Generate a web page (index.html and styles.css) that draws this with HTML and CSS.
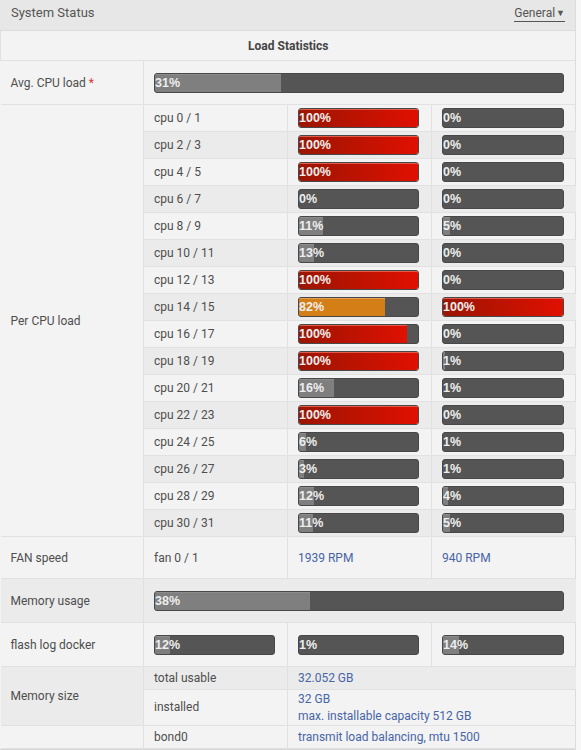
FILE: index.html
```html
<!DOCTYPE html>
<html>
<head>
<meta charset="utf-8">
<link rel="stylesheet" href="styles.css">
</head>
<body>
<div class="panel">
  <div class="panel-head">
    <span class="title">System Status</span>
    <span class="menu">General<span class="caret">▼</span></span>
  </div>
  <table class="stats">
    <colgroup><col class="c1"><col class="c2"><col class="c3"><col class="c4"></colgroup>
    <tr class="caption"><th colspan="4">Load Statistics</th></tr>
    <tr class="avg">
      <td class="label">Avg. CPU load <span class="req">*</span></td>
      <td colspan="3"><div class="bar"><div class="fill gray" style="width:31%"></div><span>31%</span></div></td>
    </tr>
    <tr class="cpu">
      <td class="label" rowspan="16">Per CPU load</td>
      <td>cpu 0 / 1</td>
      <td><div class="bar"><div class="fill red" style="width:100%"></div><span>100%</span></div></td>
      <td><div class="bar"><span>0%</span></div></td>
    </tr>
    <tr class="cpu alt">
      <td>cpu 2 / 3</td>
      <td><div class="bar"><div class="fill red" style="width:100%"></div><span>100%</span></div></td>
      <td><div class="bar"><span>0%</span></div></td>
    </tr>
    <tr class="cpu">
      <td>cpu 4 / 5</td>
      <td><div class="bar"><div class="fill red" style="width:100%"></div><span>100%</span></div></td>
      <td><div class="bar"><span>0%</span></div></td>
    </tr>
    <tr class="cpu alt">
      <td>cpu 6 / 7</td>
      <td><div class="bar"><span>0%</span></div></td>
      <td><div class="bar"><span>0%</span></div></td>
    </tr>
    <tr class="cpu">
      <td>cpu 8 / 9</td>
      <td><div class="bar"><div class="fill gray" style="width:20%"></div><span>11%</span></div></td>
      <td><div class="bar"><div class="fill gray" style="width:6%"></div><span>5%</span></div></td>
    </tr>
    <tr class="cpu alt">
      <td>cpu 10 / 11</td>
      <td><div class="bar"><div class="fill gray" style="width:13%"></div><span>13%</span></div></td>
      <td><div class="bar"><span>0%</span></div></td>
    </tr>
    <tr class="cpu">
      <td>cpu 12 / 13</td>
      <td><div class="bar"><div class="fill red" style="width:100%"></div><span>100%</span></div></td>
      <td><div class="bar"><span>0%</span></div></td>
    </tr>
    <tr class="cpu alt">
      <td>cpu 14 / 15</td>
      <td><div class="bar"><div class="fill orange" style="width:72%"></div><span>82%</span></div></td>
      <td><div class="bar"><div class="fill red" style="width:100%"></div><span>100%</span></div></td>
    </tr>
    <tr class="cpu">
      <td>cpu 16 / 17</td>
      <td><div class="bar"><div class="fill red" style="width:91%"></div><span>100%</span></div></td>
      <td><div class="bar"><span>0%</span></div></td>
    </tr>
    <tr class="cpu alt">
      <td>cpu 18 / 19</td>
      <td><div class="bar"><div class="fill red" style="width:100%"></div><span>100%</span></div></td>
      <td><div class="bar"><div class="fill gray" style="width:2%"></div><span>1%</span></div></td>
    </tr>
    <tr class="cpu">
      <td>cpu 20 / 21</td>
      <td><div class="bar"><div class="fill gray" style="width:29%"></div><span>16%</span></div></td>
      <td><div class="bar"><span>1%</span></div></td>
    </tr>
    <tr class="cpu alt">
      <td>cpu 22 / 23</td>
      <td><div class="bar"><div class="fill red" style="width:100%"></div><span>100%</span></div></td>
      <td><div class="bar"><span>0%</span></div></td>
    </tr>
    <tr class="cpu">
      <td>cpu 24 / 25</td>
      <td><div class="bar"><div class="fill gray" style="width:6%"></div><span>6%</span></div></td>
      <td><div class="bar"><span>1%</span></div></td>
    </tr>
    <tr class="cpu alt">
      <td>cpu 26 / 27</td>
      <td><div class="bar"><div class="fill gray" style="width:4%"></div><span>3%</span></div></td>
      <td><div class="bar"><span>1%</span></div></td>
    </tr>
    <tr class="cpu">
      <td>cpu 28 / 29</td>
      <td><div class="bar"><div class="fill gray" style="width:13%"></div><span>12%</span></div></td>
      <td><div class="bar"><div class="fill gray" style="width:4%"></div><span>4%</span></div></td>
    </tr>
    <tr class="cpu alt">
      <td>cpu 30 / 31</td>
      <td><div class="bar"><div class="fill gray" style="width:12%"></div><span>11%</span></div></td>
      <td><div class="bar"><div class="fill gray" style="width:6%"></div><span>5%</span></div></td>
    </tr>
    <tr class="fan">
      <td class="label">FAN speed</td>
      <td>fan 0 / 1</td>
      <td class="value">1939 RPM</td>
      <td class="value">940 RPM</td>
    </tr>
    <tr class="mem alt">
      <td class="label">Memory usage</td>
      <td colspan="3"><div class="bar"><div class="fill gray" style="width:38%"></div><span>38%</span></div></td>
    </tr>
    <tr class="flash">
      <td class="label">flash log docker</td>
      <td><div class="bar"><div class="fill gray" style="width:13%"></div><span>12%</span></div></td>
      <td><div class="bar"><span>1%</span></div></td>
      <td><div class="bar"><div class="fill gray" style="width:13%"></div><span>14%</span></div></td>
    </tr>
    <tr class="size alt">
      <td class="label" rowspan="2">Memory size</td>
      <td>total usable</td>
      <td class="value" colspan="2">32.052 GB</td>
    </tr>
    <tr class="size tall">
      <td>installed</td>
      <td class="value" colspan="2">32 GB<br>max. installable capacity 512 GB</td>
    </tr>
    <tr class="size">
      <td class="label"></td>
      <td>bond0</td>
      <td class="value" colspan="2">transmit load balancing, mtu 1500</td>
    </tr>
  </table>
</div>
</body>
</html>
```

FILE: styles.css
```css
html, body {
  margin: 0;
  padding: 0;
  background: #f7f7f7;
}

body {
  font-family: Roboto, "Liberation Sans", sans-serif;
  font-size: 12px;
  color: #4e4e4e;
}

.panel {
  width: 575px;
  border-right: 1px solid #dcdcdc;
  border-bottom: 1px solid #d6d6d6;
  background: #f3f3f3;
}

.panel-head {
  height: 31px;
  display: flex;
  align-items: flex-start;
  justify-content: space-between;
  padding: 5px 10px 0 11px;
  background: #e7e7e7;
  border-bottom: 1px solid #dcdcdc;
  box-sizing: border-box;
}

.title {
  font-size: 13px;
  line-height: 16px;
  color: #555;
}

.menu {
  font-size: 12px;
  color: #555;
  border-bottom: 1px solid #555;
  line-height: 16px;
}

.caret {
  font-size: 9px;
  margin-left: 1px;
  vertical-align: 1px;
}

.stats {
  width: 575px;
  border-collapse: collapse;
  table-layout: fixed;
}

.c1 { width: 143px; }
.c2 { width: 144px; }
.c3 { width: 144px; }
.c4 { width: 144px; }

.stats td, .stats th {
  padding: 0 12px 0 10px;
  border: 1px solid #e1e1e1;
  vertical-align: middle;
  text-align: left;
  font-weight: normal;
}

.stats tr:first-child th { border-top: none; }
.stats td:first-child { border-left: none; }
.stats td:last-child, .stats th { border-right: none; }
.stats td.label { padding-left: 10px; background: #f3f3f3; }

.caption th {
  height: 29px;
  text-align: center;
  font-weight: bold;
  color: #444;
  padding: 0;
}

.avg td { height: 43px; }
.cpu td { height: 26px; }
.fan td { height: 41px; }
.mem td { height: 43px; }
.flash td { height: 43px; }
.size td { height: 22px; }
.size.tall td { height: 35px; line-height: 17px; }

.alt td { background: #ebebeb; }
.mem.alt td.label, .size.alt td.label { background: #ebebeb; }

.req { color: #d43a3a; }
.value { color: #4765a6; }

.bar {
  position: relative;
  height: 18px;
  background: #555555;
  border: 1px solid #484848;
  border-radius: 3px;
  overflow: hidden;
}

.fill {
  height: 100%;
  box-sizing: border-box;
}

.fill.gray {
  background: #7f7f7f;
  border-top: 1px solid #8c8c8c;
}

.fill.red {
  background: linear-gradient(to right, #9b1503, #e01000);
  border-top: 1px solid #e25a48;
}

.fill.orange {
  background: #d37e17;
  border-top: 1px solid #e2a050;
}

.bar span {
  position: absolute;
  left: 0;
  top: 0;
  line-height: 18px;
  font-family: "Liberation Sans", Arial, sans-serif;
  font-weight: bold;
  font-size: 12.5px;
  color: #eeeeee;
}
```
